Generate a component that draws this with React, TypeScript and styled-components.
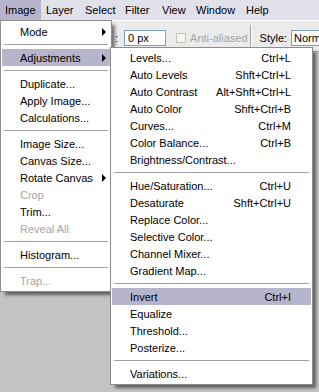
import styled, { createGlobalStyle } from "styled-components";

type Entry =
  | "sep"
  | {
      label: string;
      shortcut?: string;
      sub?: boolean;
      disabled?: boolean;
      active?: boolean;
    };

const imageMenu: Entry[] = [
  { label: "Mode", sub: true },
  "sep",
  { label: "Adjustments", sub: true, active: true },
  "sep",
  { label: "Duplicate..." },
  { label: "Apply Image..." },
  { label: "Calculations..." },
  "sep",
  { label: "Image Size..." },
  { label: "Canvas Size..." },
  { label: "Rotate Canvas", sub: true },
  { label: "Crop", disabled: true },
  { label: "Trim..." },
  { label: "Reveal All", disabled: true },
  "sep",
  { label: "Histogram..." },
  "sep",
  { label: "Trap...", disabled: true },
];

const adjustMenu: Entry[] = [
  { label: "Levels...", shortcut: "Ctrl+L" },
  { label: "Auto Levels", shortcut: "Shft+Ctrl+L" },
  { label: "Auto Contrast", shortcut: "Alt+Shft+Ctrl+L" },
  { label: "Auto Color", shortcut: "Shft+Ctrl+B" },
  { label: "Curves...", shortcut: "Ctrl+M" },
  { label: "Color Balance...", shortcut: "Ctrl+B" },
  { label: "Brightness/Contrast..." },
  "sep",
  { label: "Hue/Saturation...", shortcut: "Ctrl+U" },
  { label: "Desaturate", shortcut: "Shft+Ctrl+U" },
  { label: "Replace Color..." },
  { label: "Selective Color..." },
  { label: "Channel Mixer..." },
  { label: "Gradient Map..." },
  "sep",
  { label: "Invert", shortcut: "Ctrl+I", active: true },
  { label: "Equalize" },
  { label: "Threshold..." },
  { label: "Posterize..." },
  "sep",
  { label: "Variations..." },
];

const bar = [
  { label: "Image", w: 41, active: true },
  { label: "Layer", w: 39 },
  { label: "Select", w: 40 },
  { label: "Filter", w: 37 },
  { label: "View", w: 34 },
  { label: "Window", w: 50 },
  { label: "Help", w: 40 },
];

const MenuList = ({ items, wide }: { items: Entry[]; wide?: boolean }) => (
  <>
    {items.map((e, i) =>
      e === "sep" ? (
        <Separator key={i} />
      ) : (
        <Item key={i} $active={e.active} $disabled={e.disabled} $wide={wide}>
          <span>{e.label}</span>
          {e.shortcut && <span>{e.shortcut}</span>}
          {e.sub && <Arrow />}
        </Item>
      )
    )}
  </>
);

export default function App() {
  return (
    <>
      <GlobalStyle />
      <Screen>
        <MenuBar>
          {bar.map((b) => (
            <BarItem key={b.label} $w={b.w} $active={b.active}>
              {b.label}
            </BarItem>
          ))}
        </MenuBar>
        <OptionsBar>
          <Label>:</Label>
          <TextField>0 px</TextField>
          <CheckBox />
          <Label $disabled>Anti-aliased</Label>
          <Divider />
          <Label>Style:</Label>
          <SelectBox>Norma</SelectBox>
        </OptionsBar>
        <Workspace />
        <ImageMenu>
          <MenuList items={imageMenu} />
        </ImageMenu>
        <AdjustMenu>
          <MenuList items={adjustMenu} wide />
        </AdjustMenu>
      </Screen>
    </>
  );
}

const GlobalStyle = createGlobalStyle`
  html, body {
    margin: 0;
    padding: 0;
    background: #c3c3c3;
  }
  * {
    box-sizing: border-box;
  }
  body {
    font-family: "Liberation Sans", Arial, sans-serif;
    font-size: 11px;
    color: #000;
  }
`;

const Screen = styled.div`
  position: relative;
  width: 319px;
  height: 392px;
  overflow: hidden;
  display: flex;
  flex-direction: column;
  background: #c3c3c3;
`;

const MenuBar = styled.div`
  height: 20px;
  display: flex;
  background: #e1e1ea;
  flex-shrink: 0;
`;

const BarItem = styled.div<{ $w: number; $active?: boolean }>`
  width: ${(p) => p.$w}px;
  flex-shrink: 0;
  padding-left: 5px;
  line-height: 20px;
  white-space: nowrap;
  background: ${(p) => (p.$active ? "#b6b5cb" : "transparent")};
`;

const OptionsBar = styled.div`
  height: 32px;
  flex-shrink: 0;
  display: flex;
  align-items: center;
  padding: 4px 0 0 115px;
  background: #ebebeb;
  border-top: 1px solid #fff;
  border-bottom: 1px solid #a8a8a8;
  white-space: nowrap;

  & > * {
    flex-shrink: 0;
  }
`;

const Label = styled.span<{ $disabled?: boolean }>`
  color: ${(p) => (p.$disabled ? "#a4a4a4" : "#000")};
  margin-right: 4px;
`;

const TextField = styled.div`
  width: 42px;
  height: 16px;
  margin-left: 2px;
  padding-left: 3px;
  line-height: 14px;
  background: #fff;
  border: 1px solid #7f9db9;
  margin-right: 10px;
`;

const CheckBox = styled.div`
  width: 10px;
  height: 10px;
  border: 1px solid #c9c5b4;
  background: #f4f4f0;
  margin-right: 4px;
`;

const Divider = styled.div`
  width: 2px;
  height: 22px;
  border-left: 1px solid #a0a0a0;
  border-right: 1px solid #fff;
  margin: -4px 8px 0 -2px;
`;

const SelectBox = styled.div`
  width: 40px;
  height: 16px;
  padding-left: 2px;
  line-height: 14px;
  background: #fff;
  border: 1px solid #7f9db9;
  border-right: none;
  overflow: hidden;
`;

const Workspace = styled.div`
  flex: 1;
  background: #c3c3c3;
`;

const Dropdown = styled.div`
  position: absolute;
  background: #fff;
  border: 1px solid #8c8c8c;
  box-shadow: 4px 4px 3px -1px rgba(0, 0, 0, 0.5);
`;

const ImageMenu = styled(Dropdown)`
  top: 20px;
  left: 0;
  width: 112px;
  padding: 2px 1px;
`;

const AdjustMenu = styled(Dropdown)`
  top: 47px;
  left: 110px;
  width: 203px;
  padding: 1px 1px 2px;
`;

const Item = styled.div<{ $active?: boolean; $disabled?: boolean; $wide?: boolean }>`
  height: 17px;
  display: flex;
  align-items: center;
  justify-content: space-between;
  padding: 0 ${(p) => (p.$wide ? 20 : 4)}px 0 18px;
  white-space: nowrap;
  color: ${(p) => (p.$disabled ? "#a5a5a5" : "#000")};
  background: ${(p) => (p.$active ? "#b6b5cb" : "transparent")};
`;

const Arrow = styled.span`
  width: 0;
  height: 0;
  border-left: 4px solid #000;
  border-top: 4px solid transparent;
  border-bottom: 4px solid transparent;
`;

const Separator = styled.div`
  height: 9px;
  padding: 4px 2px 0;

  &::after {
    content: "";
    display: block;
    height: 1px;
    background: #a0a0a0;
  }
`;
